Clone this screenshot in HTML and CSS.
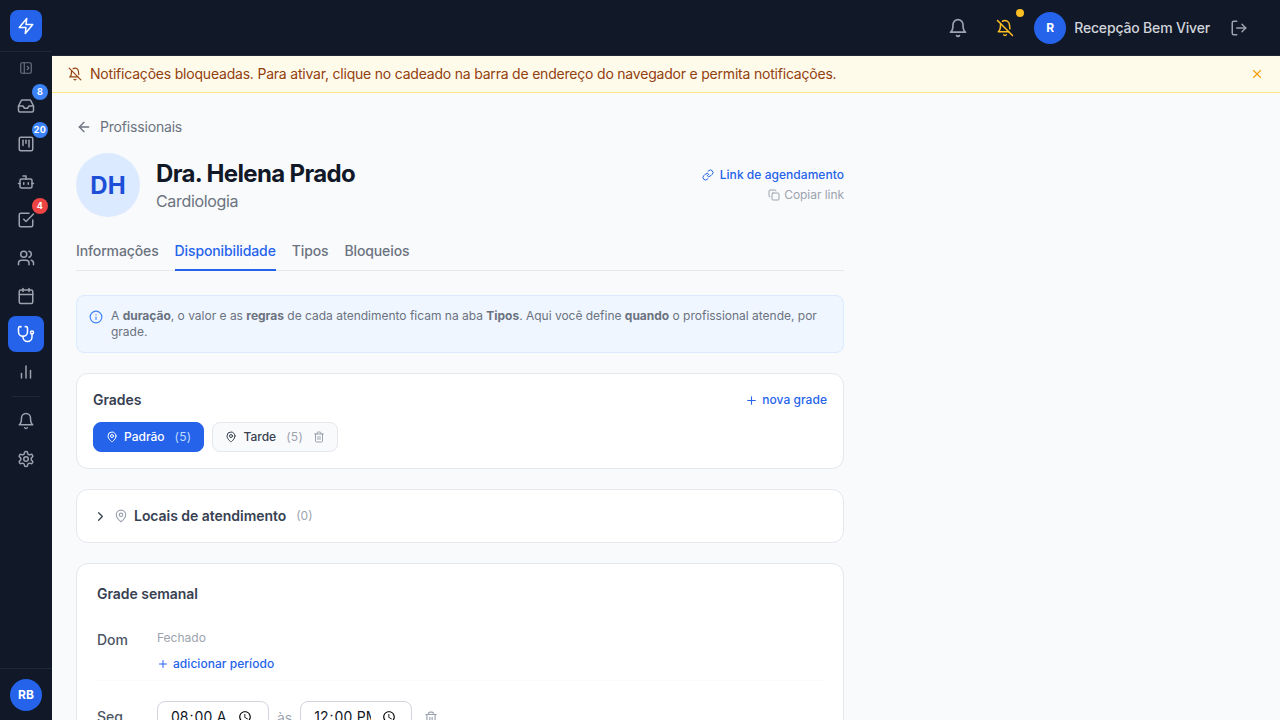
FILE: index.html
```
<!DOCTYPE html>
<html lang="pt-BR">
<head>
    <meta charset="UTF-8">
    <meta name="viewport" content="width=device-width, initial-scale=1.0">
    <title>Dra. Helena Prado</title>
    <link rel="stylesheet" href="styles.css">
</head>
<body>
    <!-- Icon sprite -->
    <svg class="sprite">
        <symbol id="zap" viewBox="0 0 24 24"><polygon points="13 2 3 14 12 14 11 22 21 10 12 10 13 2"/></symbol>
        <symbol id="panel" viewBox="0 0 24 24"><rect x="3" y="3" width="18" height="18" rx="2"/><path d="M9 3v18"/><path d="m14 9 3 3-3 3"/></symbol>
        <symbol id="inbox" viewBox="0 0 24 24"><path d="M22 12h-6l-2 3h-4l-2-3H2"/><path d="M5.45 5.11 2 12v6a2 2 0 0 0 2 2h16a2 2 0 0 0 2-2v-6l-3.45-6.89A2 2 0 0 0 16.76 4H7.24a2 2 0 0 0-1.79 1.11z"/></symbol>
        <symbol id="kanban" viewBox="0 0 24 24"><rect x="3" y="3" width="18" height="18" rx="2"/><path d="M8 7v7"/><path d="M12 7v4"/><path d="M16 7v9"/></symbol>
        <symbol id="bot" viewBox="0 0 24 24"><path d="M12 8V4H8"/><rect x="4" y="8" width="16" height="12" rx="2"/><path d="M2 14h2"/><path d="M20 14h2"/><path d="M15 13v2"/><path d="M9 13v2"/></symbol>
        <symbol id="check" viewBox="0 0 24 24"><path d="m9 11 3 3L22 4"/><path d="M21 12v7a2 2 0 0 1-2 2H5a2 2 0 0 1-2-2V5a2 2 0 0 1 2-2h11"/></symbol>
        <symbol id="users" viewBox="0 0 24 24"><path d="M16 21v-2a4 4 0 0 0-4-4H6a4 4 0 0 0-4 4v2"/><circle cx="9" cy="7" r="4"/><path d="M22 21v-2a4 4 0 0 0-3-3.87"/><path d="M16 3.13a4 4 0 0 1 0 7.75"/></symbol>
        <symbol id="calendar" viewBox="0 0 24 24"><path d="M8 2v4"/><path d="M16 2v4"/><rect x="3" y="4" width="18" height="18" rx="2"/><path d="M3 10h18"/></symbol>
        <symbol id="stethoscope" viewBox="0 0 24 24"><path d="M4.8 2.3A.3.3 0 1 0 5 2H4a2 2 0 0 0-2 2v5a6 6 0 0 0 6 6 6 6 0 0 0 6-6V4a2 2 0 0 0-2-2h-1a.2.2 0 1 0 .3.3"/><path d="M8 15v1a6 6 0 0 0 6 6 6 6 0 0 0 6-6v-4"/><circle cx="20" cy="10" r="2"/></symbol>
        <symbol id="bars" viewBox="0 0 24 24"><path d="M18 20V10"/><path d="M12 20V4"/><path d="M6 20v-6"/></symbol>
        <symbol id="bell" viewBox="0 0 24 24"><path d="M6 8a6 6 0 0 1 12 0c0 7 3 9 3 9H3s3-2 3-9"/><path d="M10.3 21a1.94 1.94 0 0 0 3.4 0"/></symbol>
        <symbol id="bell-off" viewBox="0 0 24 24"><path d="M8.7 3A6 6 0 0 1 18 8a21.3 21.3 0 0 0 .6 5"/><path d="M17 17H3s3-2 3-9a4.67 4.67 0 0 1 .3-1.7"/><path d="M10.3 21a1.94 1.94 0 0 0 3.4 0"/><path d="m2 2 20 20"/></symbol>
        <symbol id="settings" viewBox="0 0 24 24"><path d="M12.22 2h-.44a2 2 0 0 0-2 2v.18a2 2 0 0 1-1 1.73l-.43.25a2 2 0 0 1-2 0l-.15-.08a2 2 0 0 0-2.73.73l-.22.38a2 2 0 0 0 .73 2.73l.15.1a2 2 0 0 1 1 1.72v.51a2 2 0 0 1-1 1.74l-.15.09a2 2 0 0 0-.73 2.73l.22.38a2 2 0 0 0 2.73.73l.15-.08a2 2 0 0 1 2 0l.43.25a2 2 0 0 1 1 1.73V20a2 2 0 0 0 2 2h.44a2 2 0 0 0 2-2v-.18a2 2 0 0 1 1-1.73l.43-.25a2 2 0 0 1 2 0l.15.08a2 2 0 0 0 2.73-.73l.22-.39a2 2 0 0 0-.73-2.73l-.15-.08a2 2 0 0 1-1-1.74v-.5a2 2 0 0 1 1-1.74l.15-.09a2 2 0 0 0 .73-2.73l-.22-.38a2 2 0 0 0-2.73-.73l-.15.08a2 2 0 0 1-2 0l-.43-.25a2 2 0 0 1-1-1.73V4a2 2 0 0 0-2-2z"/><circle cx="12" cy="12" r="3"/></symbol>
        <symbol id="logout" viewBox="0 0 24 24"><path d="M9 21H5a2 2 0 0 1-2-2V5a2 2 0 0 1 2-2h4"/><path d="m16 17 5-5-5-5"/><path d="M21 12H9"/></symbol>
        <symbol id="close" viewBox="0 0 24 24"><path d="M18 6 6 18"/><path d="m6 6 12 12"/></symbol>
        <symbol id="back" viewBox="0 0 24 24"><path d="m12 19-7-7 7-7"/><path d="M19 12H5"/></symbol>
        <symbol id="link" viewBox="0 0 24 24"><path d="M10 13a5 5 0 0 0 7.54.54l3-3a5 5 0 0 0-7.07-7.07l-1.72 1.71"/><path d="M14 11a5 5 0 0 0-7.54-.54l-3 3a5 5 0 0 0 7.07 7.07l1.71-1.71"/></symbol>
        <symbol id="copy" viewBox="0 0 24 24"><rect x="8" y="8" width="14" height="14" rx="2"/><path d="M4 16c-1.1 0-2-.9-2-2V4c0-1.1.9-2 2-2h10c1.1 0 2 .9 2 2"/></symbol>
        <symbol id="info" viewBox="0 0 24 24"><circle cx="12" cy="12" r="10"/><path d="M12 16v-4"/><path d="M12 8h.01"/></symbol>
        <symbol id="plus" viewBox="0 0 24 24"><path d="M5 12h14"/><path d="M12 5v14"/></symbol>
        <symbol id="pin" viewBox="0 0 24 24"><path d="M20 10c0 6-8 12-8 12s-8-6-8-12a8 8 0 0 1 16 0Z"/><circle cx="12" cy="10" r="3"/></symbol>
        <symbol id="trash" viewBox="0 0 24 24"><path d="M3 6h18"/><path d="M19 6v14c0 1-1 2-2 2H7c-1 0-2-1-2-2V6"/><path d="M8 6V4c0-1 1-2 2-2h4c1 0 2 1 2 2v2"/><path d="M10 11v6"/><path d="M14 11v6"/></symbol>
        <symbol id="chevron" viewBox="0 0 24 24"><path d="m9 18 6-6-6-6"/></symbol>
    </svg>

    <div class="app">
        <aside class="sidebar">
            <div class="brand">
                <div class="logo"><svg class="icon s18"><use href="#zap"/></svg></div>
            </div>
            <button class="toggle"><svg class="icon s14"><use href="#panel"/></svg></button>
            <nav class="nav">
                <a class="nav-item"><svg class="icon s18"><use href="#inbox"/></svg><span class="badge">8</span></a>
                <a class="nav-item"><svg class="icon s18"><use href="#kanban"/></svg><span class="badge">20</span></a>
                <a class="nav-item"><svg class="icon s18"><use href="#bot"/></svg></a>
                <a class="nav-item"><svg class="icon s18"><use href="#check"/></svg><span class="badge red">4</span></a>
                <a class="nav-item"><svg class="icon s18"><use href="#users"/></svg></a>
                <a class="nav-item"><svg class="icon s18"><use href="#calendar"/></svg></a>
                <a class="nav-item active"><svg class="icon s18"><use href="#stethoscope"/></svg></a>
                <a class="nav-item"><svg class="icon s18"><use href="#bars"/></svg></a>
                <div class="nav-divider"></div>
                <a class="nav-item"><svg class="icon s18"><use href="#bell"/></svg></a>
                <a class="nav-item"><svg class="icon s18"><use href="#settings"/></svg></a>
            </nav>
            <div class="sidebar-footer">
                <div class="avatar">RB</div>
            </div>
        </aside>

        <div class="content">
            <header class="topbar">
                <button class="top-btn"><svg class="icon s20"><use href="#bell"/></svg></button>
                <button class="top-btn muted-bell"><svg class="icon s18"><use href="#bell-off"/></svg><span class="dot"></span></button>
                <div class="avatar user-avatar">R</div>
                <span class="user-name">Recepção Bem Viver</span>
                <button class="top-btn logout"><svg class="icon s18"><use href="#logout"/></svg></button>
            </header>

            <div class="banner">
                <svg class="icon s14"><use href="#bell-off"/></svg>
                <span class="banner-text">Notificações bloqueadas. Para ativar, clique no cadeado na barra de endereço do navegador e permita notificações.</span>
                <button class="banner-close"><svg class="icon s14"><use href="#close"/></svg></button>
            </div>

            <main class="page">
                <a class="back"><svg class="icon s16"><use href="#back"/></svg>Profissionais</a>

                <div class="profile">
                    <div class="profile-avatar">DH</div>
                    <div class="profile-info">
                        <h1>Dra. Helena Prado</h1>
                        <p>Cardiologia</p>
                    </div>
                    <div class="profile-links">
                        <a class="link"><svg class="icon s12"><use href="#link"/></svg>Link de agendamento</a>
                        <button class="copy"><svg class="icon s12"><use href="#copy"/></svg>Copiar link</button>
                    </div>
                </div>

                <div class="tabs">
                    <button class="tab">Informações</button>
                    <button class="tab active">Disponibilidade</button>
                    <button class="tab">Tipos</button>
                    <button class="tab">Bloqueios</button>
                </div>

                <div class="info-box">
                    <svg class="icon s14"><use href="#info"/></svg>
                    <p>A <strong>duração</strong>, o valor e as <strong>regras</strong> de cada atendimento ficam na aba <strong>Tipos</strong>. Aqui você define <strong>quando</strong> o profissional atende, por grade.</p>
                </div>

                <section class="card">
                    <div class="card-header">
                        <h2>Grades</h2>
                        <button class="link add-grade"><svg class="icon s13"><use href="#plus"/></svg>nova grade</button>
                    </div>
                    <div class="chips">
                        <button class="chip selected"><svg class="icon s12"><use href="#pin"/></svg>Padrão <span class="count">(5)</span></button>
                        <button class="chip"><svg class="icon s12"><use href="#pin"/></svg>Tarde <span class="count">(5)</span><svg class="icon s12 remove"><use href="#trash"/></svg></button>
                    </div>
                </section>

                <section class="card locations">
                    <svg class="icon s15"><use href="#chevron"/></svg>
                    <svg class="icon s14 pin"><use href="#pin"/></svg>
                    <h2>Locais de atendimento</h2>
                    <span class="locations-count">(0)</span>
                </section>

                <section class="card week">
                    <h2>Grade semanal</h2>
                    <div class="day">
                        <span class="day-name">Dom</span>
                        <div class="day-body">
                            <span class="closed">Fechado</span>
                            <button class="link add-period"><svg class="icon s12"><use href="#plus"/></svg>adicionar período</button>
                        </div>
                    </div>
                    <div class="day">
                        <span class="day-name">Seg</span>
                        <div class="day-body">
                            <div class="period">
                                <input type="time" value="08:00">
                                <span class="sep">às</span>
                                <input type="time" value="12:00">
                                <button class="period-remove"><svg class="icon s14"><use href="#trash"/></svg></button>
                            </div>
                        </div>
                    </div>
                </section>
            </main>
        </div>
    </div>
</body>
</html>
```
FILE: styles.css
```
* {
    margin: 0;
    padding: 0;
    box-sizing: border-box;
}

body {
    font-family: Inter, 'Liberation Sans', sans-serif;
    font-size: 14px;
    line-height: 20px;
    color: #374151;
    background: #f9fafb;
    height: 100vh;
    overflow: hidden;
}

button {
    font: inherit;
    color: inherit;
    background: none;
    border: none;
    cursor: pointer;
}

.sprite {
    display: none;
}

/* Icons */
.icon {
    flex-shrink: 0;
    display: block;
    fill: none;
    stroke: currentColor;
    stroke-width: 2;
    stroke-linecap: round;
    stroke-linejoin: round;
}

.s12 { width: 12px; height: 12px; }
.s13 { width: 13px; height: 13px; }
.s14 { width: 14px; height: 14px; }
.s15 { width: 15px; height: 15px; }
.s16 { width: 16px; height: 16px; }
.s18 { width: 18px; height: 18px; }
.s20 { width: 20px; height: 20px; }

.app {
    display: flex;
    height: 100vh;
    overflow: hidden;
}

/* Sidebar */
.sidebar {
    width: 52px;
    flex-shrink: 0;
    background: #111827;
    color: #9ca3af;
    display: flex;
    flex-direction: column;
    align-items: center;
}

.brand {
    width: 100%;
    height: 52px;
    padding: 10px;
    border-bottom: 1px solid #1f2937;
}

.logo {
    width: 32px;
    height: 32px;
    border-radius: 8px;
    background: #2563eb;
    color: white;
    display: flex;
    align-items: center;
    justify-content: center;
}

.toggle {
    color: #6b7280;
    padding: 9px;
    margin-bottom: 4px;
}

.nav {
    flex: 1;
    display: flex;
    flex-direction: column;
    align-items: center;
    gap: 2px;
}

.nav-item {
    position: relative;
    width: 36px;
    height: 36px;
    border-radius: 8px;
    display: flex;
    align-items: center;
    justify-content: center;
}

.nav-item.active {
    background: #2563eb;
    color: white;
}

.badge {
    position: absolute;
    top: -4px;
    right: -4px;
    min-width: 16px;
    height: 16px;
    border-radius: 8px;
    background: #3b82f6;
    color: white;
    font-size: 9px;
    font-weight: 700;
    line-height: 16px;
    letter-spacing: 0.3px;
    text-align: center;
}

.badge.red {
    background: #ef4444;
}

.nav-divider {
    width: 28px;
    height: 1px;
    margin: 4px 0;
    background: #1f2937;
}

.sidebar-footer {
    width: 100%;
    height: 52px;
    padding: 10px;
    border-top: 1px solid #1f2937;
}

.avatar {
    width: 32px;
    height: 32px;
    border-radius: 50%;
    background: #2563eb;
    color: white;
    font-size: 12px;
    font-weight: 700;
    display: flex;
    align-items: center;
    justify-content: center;
}

/* Top bar */
.content {
    flex: 1;
    min-width: 0;
}

.topbar {
    height: 56px;
    padding-right: 24px;
    background: #111827;
    border-bottom: 1px solid #1f2937;
    color: #9ca3af;
    display: flex;
    align-items: center;
    justify-content: flex-end;
}

.top-btn {
    padding: 8px;
}

.muted-bell {
    position: relative;
    color: #fbbf24;
    margin: 0 12px;
}

.dot {
    position: absolute;
    top: -2px;
    right: -2px;
    width: 8px;
    height: 8px;
    border-radius: 50%;
    background: #fbbf24;
}

.user-name {
    margin: 0 12px 0 8px;
    color: #d1d5db;
    font-weight: 500;
    letter-spacing: -0.17px;
}

/* Blocked notifications banner */
.banner {
    display: flex;
    align-items: center;
    gap: 8px;
    height: 37px;
    padding: 0 16px;
    background: #fffbeb;
    border-bottom: 1px solid #fde68a;
    color: #92400e;
}

.banner-text {
    flex: 1;
    letter-spacing: -0.205px;
}

.banner-close {
    color: #f59e0b;
}

/* Page */
.page {
    max-width: 816px;
    padding: 24px;
}

.back {
    display: flex;
    align-items: center;
    gap: 8px;
    color: #6b7280;
    letter-spacing: -0.18px;
    margin-bottom: 16px;
}

.profile {
    display: flex;
    align-items: center;
    gap: 16px;
    margin-bottom: 24px;
}

.profile-avatar {
    width: 64px;
    height: 64px;
    padding-top: 2px;
    border-radius: 50%;
    background: #dbeafe;
    color: #1d4ed8;
    font-size: 24px;
    font-weight: 700;
    display: flex;
    align-items: center;
    justify-content: center;
}

.profile-info {
    flex: 1;
}

.profile-info h1 {
    color: #111827;
    font-size: 24px;
    line-height: 30px;
    padding-top: 2px;
    font-weight: 700;
    letter-spacing: -0.64px;
}

.profile-info p {
    color: #6b7280;
    font-size: 16px;
    line-height: 24px;
    letter-spacing: -0.33px;
}

.profile-links {
    display: flex;
    flex-direction: column;
    align-items: flex-end;
    gap: 4px;
}

.link {
    display: flex;
    align-items: center;
    gap: 6px;
    color: #2563eb;
    font-size: 12px;
    line-height: 16px;
    font-weight: 500;
    letter-spacing: 0.04px;
}

.copy {
    display: flex;
    align-items: center;
    gap: 4px;
    color: #9ca3af;
    font-size: 12px;
    line-height: 16px;
    letter-spacing: -0.05px;
}

.tabs {
    display: flex;
    gap: 16px;
    border-bottom: 1px solid #e5e7eb;
    margin-bottom: 24px;
}

.tab {
    padding-bottom: 8px;
    margin-bottom: -1px;
    border-bottom: 2px solid transparent;
    color: #6b7280;
    font-weight: 500;
    letter-spacing: -0.12px;
}

.tab.active {
    color: #2563eb;
    border-color: #2563eb;
}

.info-box {
    display: flex;
    gap: 8px;
    padding: 12px;
    margin-bottom: 20px;
    background: #eff6ff;
    border: 1px solid #dbeafe;
    border-radius: 8px;
    color: #6b7280;
    font-size: 12px;
    line-height: 16px;
    letter-spacing: -0.01px;
}

.info-box .icon {
    margin-top: 2px;
    color: #3b82f6;
}

.info-box strong {
    font-weight: 700;
}

/* Cards */
.card {
    padding: 16px;
    margin-bottom: 20px;
    background: white;
    border: 1px solid #e5e7eb;
    border-radius: 12px;
}

.card h2 {
    color: #374151;
    font-size: 14px;
    line-height: 20px;
    font-weight: 600;
    letter-spacing: -0.04px;
}

.card-header {
    display: flex;
    align-items: center;
    justify-content: space-between;
    margin-bottom: 12px;
}

.add-grade {
    gap: 4px;
}

.chips {
    display: flex;
    gap: 8px;
}

.chip {
    display: flex;
    align-items: center;
    gap: 6px;
    padding: 6px 12px;
    border: 1px solid #e5e7eb;
    border-radius: 8px;
    background: #f9fafb;
    color: #374151;
    font-size: 12px;
    line-height: 16px;
    font-weight: 500;
}

.chip.selected {
    background: #2563eb;
    border-color: #2563eb;
    color: white;
}

.count {
    margin-left: 4px;
    color: #9ca3af;
    font-weight: 400;
    letter-spacing: 0.3px;
}

.chip.selected .count {
    color: #bfdbfe;
}

.remove {
    margin-left: 4px;
    color: #9ca3af;
}

.locations {
    display: flex;
    align-items: center;
    gap: 6px;
}

.locations .pin {
    color: #9ca3af;
}

.locations-count {
    margin-left: 4px;
    color: #9ca3af;
    font-size: 12px;
}

/* Weekly schedule */
.week {
    padding: 20px;
}

.day {
    display: flex;
    margin-top: 20px;
    padding-bottom: 8px;
    border-bottom: 1px solid #f9fafb;
}

.day-name {
    width: 60px;
    padding-top: 6px;
    color: #4b5563;
    font-weight: 500;
}

.closed {
    display: block;
    padding: 6px 0 10px;
    color: #9ca3af;
    font-size: 12px;
    line-height: 16px;
}

.add-period {
    gap: 4px;
}

.period {
    display: flex;
    align-items: center;
    gap: 8px;
}

.period input {
    width: 112px;
    height: 34px;
    padding: 5px 12px 7px;
    border: 1px solid #d1d5db;
    border-radius: 8px;
    background: white;
    color: #111827;
    font: inherit;
}

.sep {
    color: #9ca3af;
}

.period-remove {
    padding: 4px;
    color: #9ca3af;
}
```
